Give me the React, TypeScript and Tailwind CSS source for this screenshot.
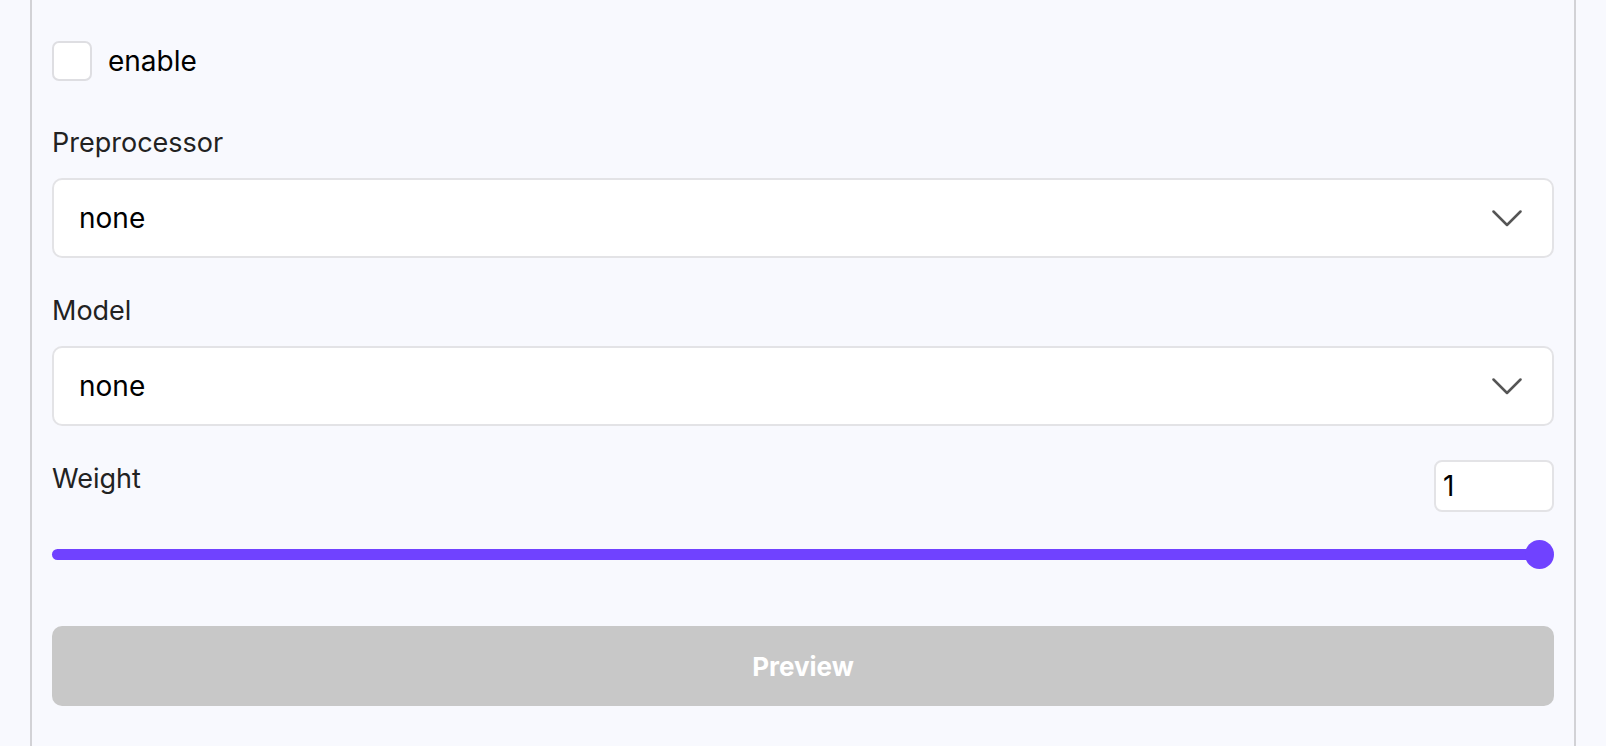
import { useState } from "react"

function Chevron() {
    return (
        <svg width="30" height="17" viewBox="0 0 30 17" fill="none" className="shrink-0">
            <polyline points="1.5,1.5 15,15 28.5,1.5" stroke="#555" strokeWidth="2.5" strokeLinecap="round" strokeLinejoin="round" />
        </svg>
    )
}

function Select({ value }: { value: string }) {
    return (
        <div className="h-[80px] w-full bg-white border-2 border-[#e3e3e6] rounded-[10px] flex items-center justify-between pl-[25px] pr-[30px]">
            <span className="text-[28px] text-black">{value}</span>
            <Chevron />
        </div>
    )
}

export default function App() {
    const [enabled, setEnabled] = useState(false)
    const [weight, setWeight] = useState(1)

    return (
        <div className="h-[746px] w-full bg-[#f8f9fe] overflow-hidden font-['Inter','Liberation_Sans',sans-serif]">
            <div className="ml-[30px] w-[1546px] h-full border-x-2 border-[#d2d2d6] px-[20px] pt-[40px]">
                {/* enable row */}
                <label className="flex items-center gap-4 cursor-pointer">
                    <input
                        type="checkbox"
                        checked={enabled}
                        onChange={e => setEnabled(e.target.checked)}
                        className="appearance-none w-[40px] h-[40px] bg-white border-2 border-[#dedee2] rounded-[7px]"
                    />
                    <span className="text-[28px] text-black">enable</span>
                </label>

                <div className="mt-[45px] text-[27px] leading-[32px] text-[#222]">Preprocessor</div>
                <div className="mt-[19px]">
                    <Select value="none" />
                </div>

                <div className="mt-[37px] text-[27px] leading-[32px] text-[#222]">Model</div>
                <div className="mt-[19px]">
                    <Select value="none" />
                </div>

                {/* weight */}
                <div className="mt-[37px] flex items-start justify-between">
                    <div className="text-[27px] leading-[32px] text-[#222]">Weight</div>
                    <input
                        type="text"
                        value={weight}
                        onChange={e => setWeight(Number(e.target.value) || 0)}
                        className="-mt-[3px] w-[120px] h-[52px] bg-white border-2 border-[#e3e3e6] rounded-[8px] pl-[7px] text-[28px] text-black outline-none"
                    />
                </div>
                <div className="mt-[28px] h-[29px] flex items-center">
                    <div className="flex-1 h-[11px] bg-[#7042ff] rounded-l-full" />
                    <div className="w-[29px] h-[29px] rounded-full bg-[#7042ff] -ml-[14px]" />
                </div>

                <button className="mt-[57px] w-full h-[80px] bg-[#c8c8c8] rounded-[10px] text-white font-bold text-[26px]">
                    Preview
                </button>
            </div>
        </div>
    )
}
